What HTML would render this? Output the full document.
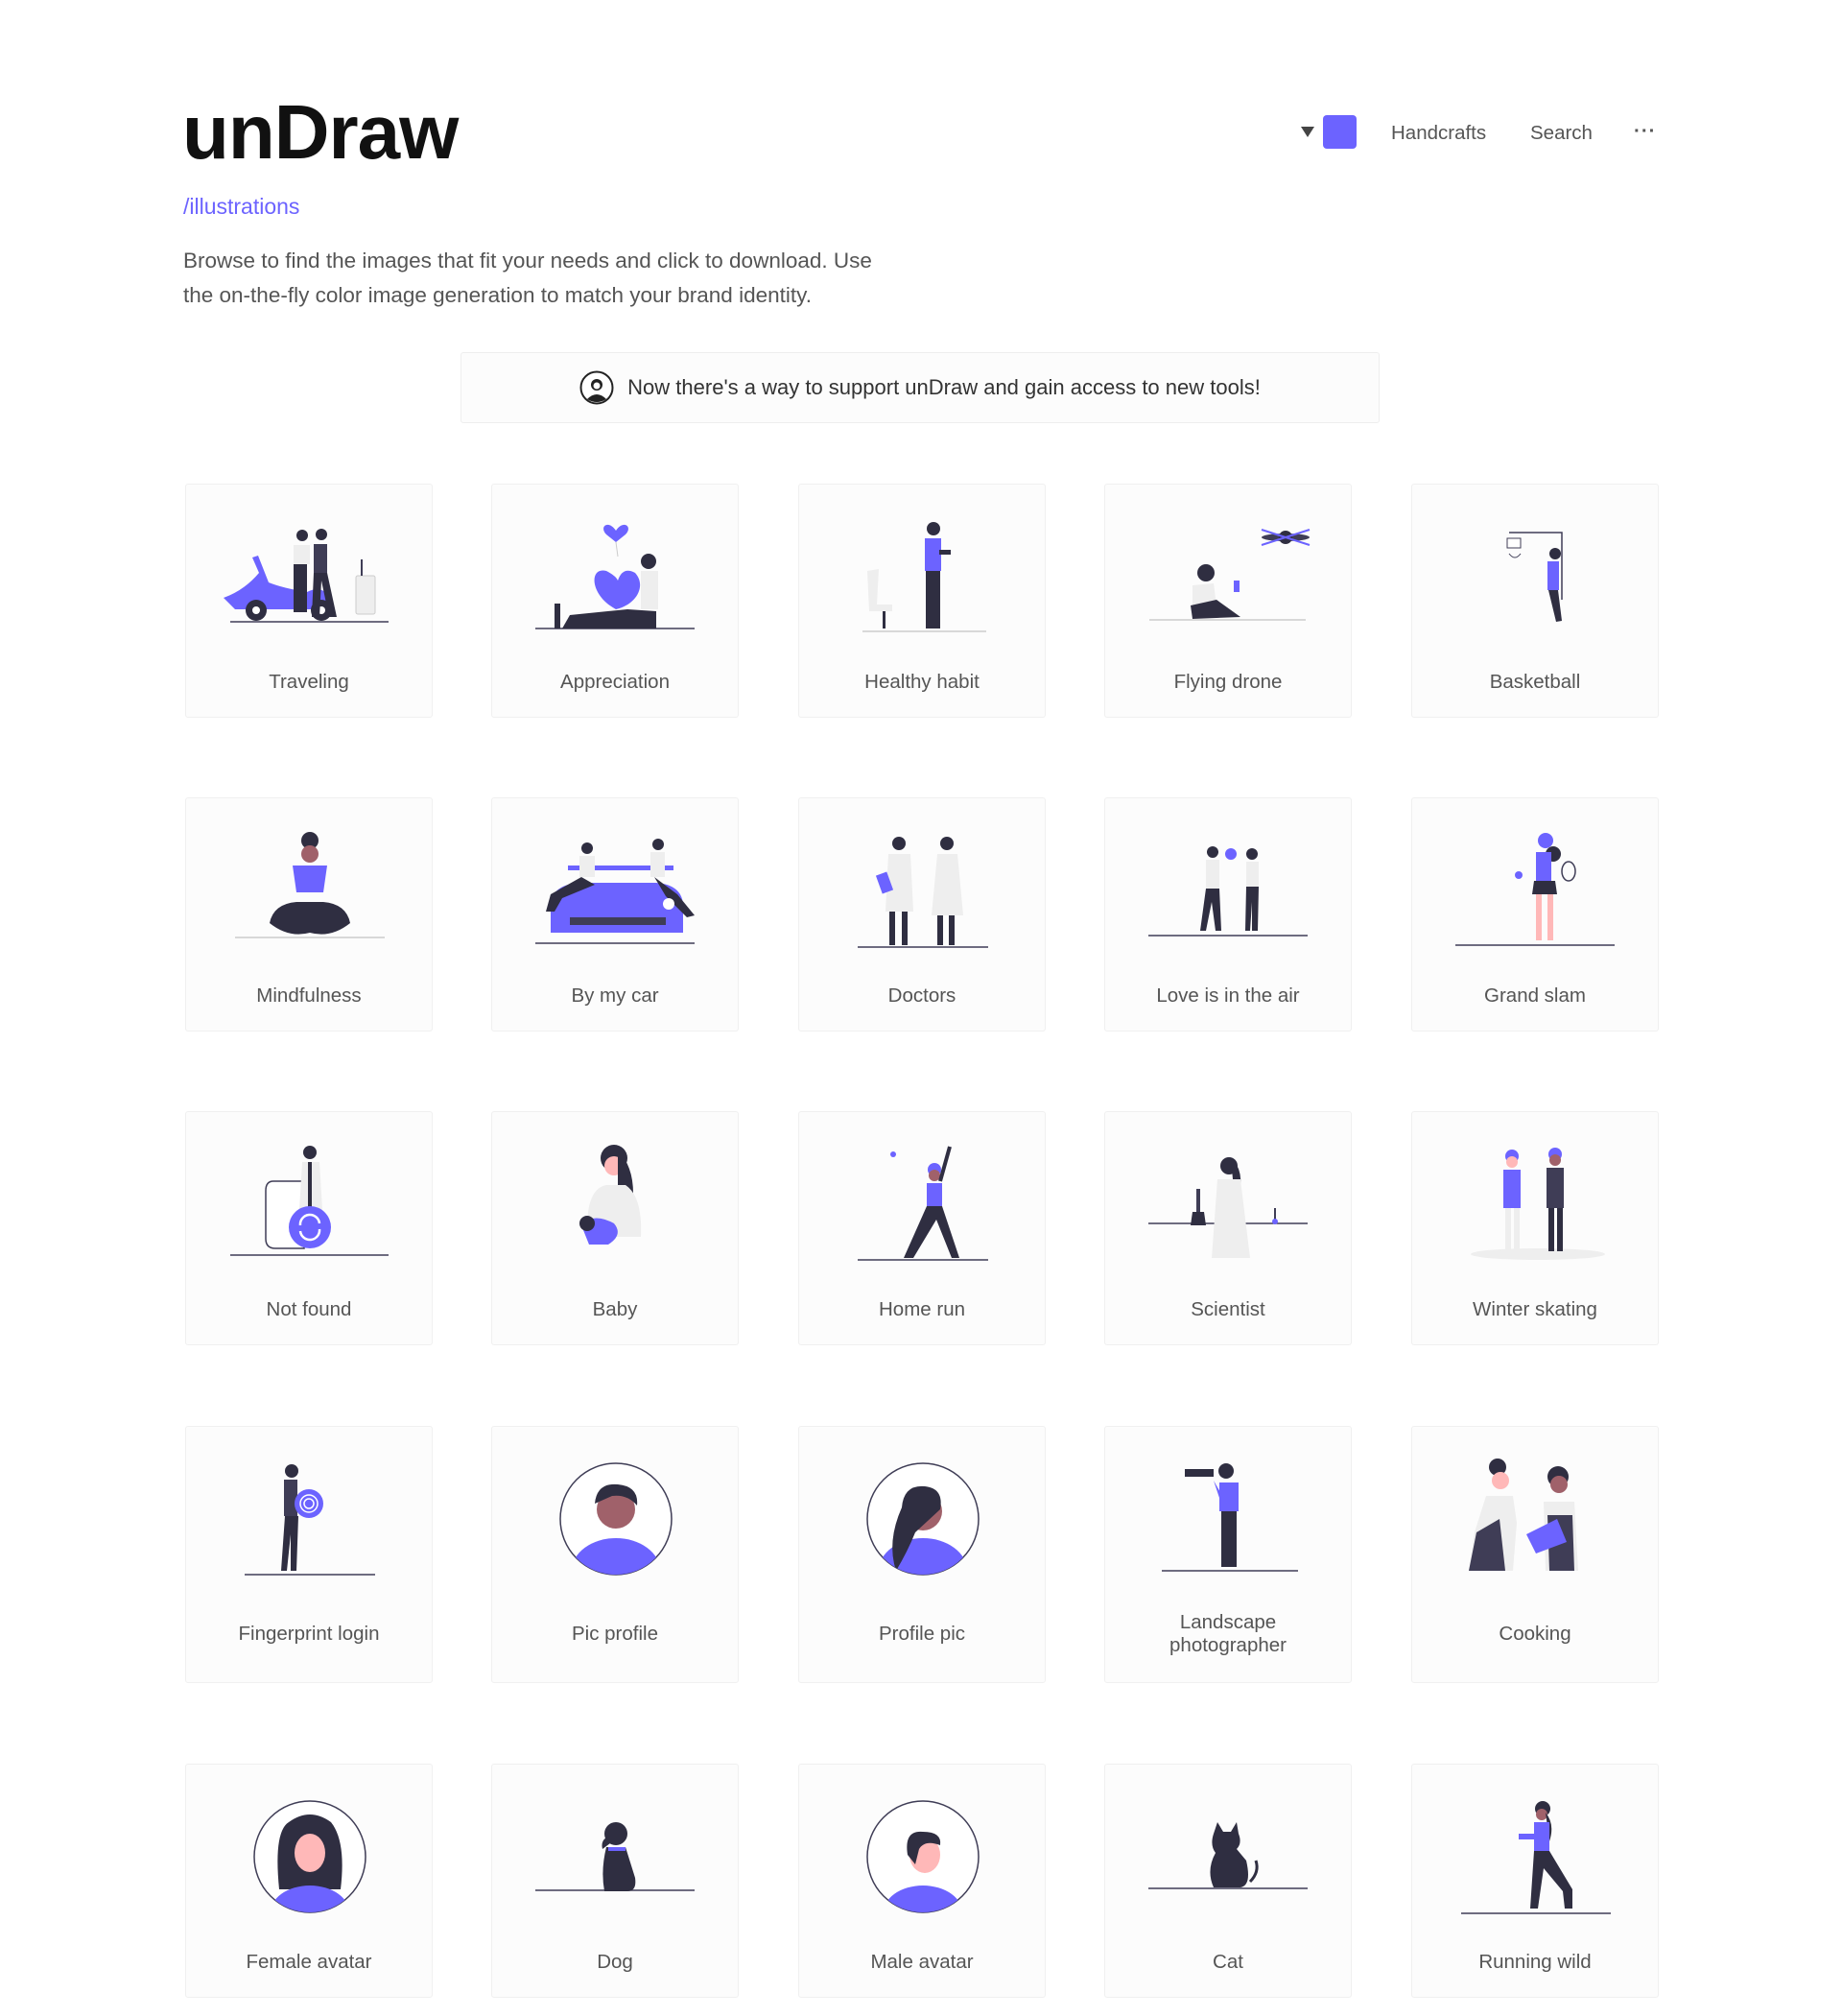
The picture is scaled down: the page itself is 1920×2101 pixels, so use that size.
<!DOCTYPE html>
<html><head><meta charset="utf-8">
<style>
*{margin:0;padding:0;box-sizing:border-box}
html,body{width:1920px;height:2101px;background:#fff;font-family:"Liberation Sans",sans-serif;overflow:hidden}
.abs{position:absolute}
#logo{left:190px;top:92px;font-size:80px;font-weight:bold;color:#111;letter-spacing:-1px}
#sub{left:191px;top:202px;font-size:23px;color:#6c63ff}
#desc{left:191px;top:254px;font-size:22.5px;line-height:36px;color:#555;white-space:nowrap}
#banner{left:480px;top:367px;width:958px;height:74px;background:#fcfcfc;border:1px solid #eee;border-radius:3px;font-size:22px;color:#333;display:flex;align-items:center;justify-content:center;gap:14px}
.nav{top:127px;font-size:20.5px;color:#555}
.card{position:absolute;width:258px;height:244px;background:#fcfcfc;border:1px solid #f0f0f0;border-radius:3px}
.card svg{position:absolute;left:1px;top:0}
.card .l{position:absolute;left:0;right:0;top:194px;text-align:center;font-size:20.5px;line-height:24px;color:#555}
.tall{height:268px}
</style></head><body>
<div id="logo" class="abs">unDraw</div>
<div id="sub" class="abs">/illustrations</div>
<div id="desc" class="abs">Browse to find the images that fit your needs and click to download. Use<br>the on-the-fly color image generation to match your brand identity.</div>
<svg class="abs" style="left:1356px;top:132px" width="14" height="11"><path d="M0 0H14L7 11Z" fill="#444"/></svg>
<div class="abs" style="left:1379px;top:120px;width:35px;height:35px;background:#6c63ff;border-radius:4px"></div>
<div class="abs nav" style="left:1450px">Handcrafts</div>
<div class="abs nav" style="left:1595px">Search</div>
<div class="abs nav" style="left:1703px;top:125px;font-weight:bold;letter-spacing:1px">···</div>
<div id="banner" class="abs"><svg width="36" height="36" viewBox="0 0 36 36"><circle cx="18" cy="18" r="16.5" fill="#fff" stroke="#222" stroke-width="2"/><circle cx="18" cy="15" r="6" fill="#222"/><circle cx="18" cy="16" r="3.5" fill="#fff"/><path d="M8 30Q18 20 28 30Q18 36 8 30Z" fill="#222"/></svg><span>Now there's a way to support unDraw and gain access to new tools!</span></div>

<!-- Row 1 -->
<div class="card" style="left:193px;top:504px"><svg width="256" height="180"><line x1="45" y1="143" x2="210" y2="143" stroke="#3f3d56" stroke-width="1.5"/><path d="M38 118Q60 110 75 92L68 76L74 74L85 102Q100 108 125 112Q140 104 150 118L150 130H50Z" fill="#6c63ff"/><circle cx="72" cy="131" r="11" fill="#2f2e41"/><circle cx="72" cy="131" r="4" fill="#fff"/><circle cx="140" cy="131" r="11" fill="#2f2e41"/><circle cx="140" cy="131" r="4" fill="#fff"/><circle cx="120" cy="53" r="6" fill="#2f2e41"/><rect x="111" y="63" width="17" height="20" fill="#eee"/><rect x="111" y="83" width="14" height="50" fill="#2f2e41"/><circle cx="140" cy="52" r="6" fill="#2f2e41"/><rect x="132" y="62" width="14" height="30" fill="#3f3d56"/><path d="M132 92L146 92L156 138L148 138L140 100L138 138L130 138Z" fill="#2f2e41"/><rect x="176" y="95" width="20" height="40" rx="2" fill="#eee" stroke="#ccc"/><line x1="182" y1="78" x2="182" y2="95" stroke="#3f3d56" stroke-width="2"/></svg><div class="l">Traveling</div></div>
<div class="card" style="left:512px;top:504px"><svg width="256" height="180"><line x1="44" y1="150" x2="210" y2="150" stroke="#3f3d56" stroke-width="1.5"/><path d="M128 48C120 36 110 44 118 52L128 60L138 52C146 44 136 36 128 48Z" fill="#6c63ff"/><line x1="128" y1="60" x2="130" y2="75" stroke="#ccc"/><circle cx="162" cy="80" r="8" fill="#2f2e41"/><rect x="154" y="90" width="18" height="40" fill="#eee"/><path d="M128 130C100 115 100 85 118 90Q128 95 130 100Q135 85 148 92C160 105 150 125 128 130Z" fill="#6c63ff"/><path d="M72 150L80 136L140 130L170 132L170 150Z" fill="#2f2e41"/><rect x="64" y="124" width="6" height="26" fill="#2f2e41"/></svg><div class="l">Appreciation</div></div>
<div class="card" style="left:832px;top:504px"><svg width="256" height="180"><line x1="65" y1="153" x2="194" y2="153" stroke="#ccc" stroke-width="1.5"/><path d="M70 90L82 88L80 125H96V132H72Z" fill="#eee"/><rect x="86" y="132" width="3" height="18" fill="#2f2e41"/><circle cx="139" cy="46" r="7" fill="#2f2e41"/><rect x="130" y="56" width="17" height="34" fill="#6c63ff"/><rect x="131" y="90" width="15" height="60" fill="#2f2e41"/><rect x="145" y="68" width="12" height="5" fill="#2f2e41"/></svg><div class="l">Healthy habit</div></div>
<div class="card" style="left:1151px;top:504px"><svg width="256" height="180"><line x1="45" y1="141" x2="208" y2="141" stroke="#ccc" stroke-width="1.5"/><ellipse cx="187" cy="55" rx="25" ry="4" fill="#3f3d56"/><circle cx="187" cy="55" r="7" fill="#2f2e41"/><path d="M162 47L212 63M162 63L212 47" stroke="#6c63ff" stroke-width="2"/><circle cx="104" cy="92" r="9" fill="#2f2e41"/><path d="M90 105L112 103L115 126L90 126Z" fill="#eee"/><path d="M88 126L115 120L140 138L90 140Z" fill="#2f2e41"/><rect x="133" y="100" width="6" height="12" fill="#6c63ff"/></svg><div class="l">Flying drone</div></div>
<div class="card" style="left:1471px;top:504px"><svg width="256" height="180"><path d="M100 50H155V120" stroke="#3f3d56" stroke-width="1.5" fill="none"/><rect x="98" y="56" width="14" height="10" fill="#fff" stroke="#3f3d56"/><path d="M100 72Q106 80 112 72" stroke="#3f3d56" fill="none"/><circle cx="148" cy="72" r="6" fill="#2f2e41"/><rect x="140" y="80" width="12" height="30" fill="#6c63ff"/><path d="M141 110L151 110L155 142L149 143Z" fill="#2f2e41"/></svg><div class="l">Basketball</div></div>

<!-- Row 2 -->
<div class="card" style="left:193px;top:831px"><svg width="256" height="180"><line x1="50" y1="145" x2="206" y2="145" stroke="#ccc" stroke-width="1.5"/><circle cx="128" cy="44" r="9" fill="#2f2e41"/><circle cx="128" cy="58" r="9" fill="#a0616a"/><path d="M110 70H146L142 98H114Z" fill="#6c63ff"/><path d="M86 130Q90 110 114 108H142Q166 110 170 130Q150 146 128 140Q106 146 86 130Z" fill="#2f2e41"/></svg><div class="l">Mindfulness</div></div>
<div class="card" style="left:512px;top:831px"><svg width="256" height="180"><line x1="44" y1="151" x2="210" y2="151" stroke="#3f3d56" stroke-width="1.5"/><path d="M60 110Q62 90 90 88H170Q196 90 198 110V140H60Z" fill="#6c63ff"/><rect x="78" y="70" width="110" height="5" fill="#6c63ff"/><rect x="80" y="124" width="100" height="8" fill="#3f3d56"/><circle cx="98" cy="52" r="6" fill="#2f2e41"/><rect x="90" y="60" width="16" height="22" fill="#eee"/><path d="M92 82L60 100L55 118L64 118L72 104L106 90Z" fill="#2f2e41"/><circle cx="172" cy="48" r="6" fill="#2f2e41"/><rect x="164" y="56" width="15" height="26" fill="#eee"/><path d="M168 82L192 100L210 122L202 124L180 102Z" fill="#2f2e41"/><circle cx="183" cy="110" r="6" fill="#fff"/></svg><div class="l">By my car</div></div>
<div class="card" style="left:832px;top:831px"><svg width="256" height="180"><line x1="60" y1="155" x2="196" y2="155" stroke="#3f3d56" stroke-width="1.5"/><circle cx="103" cy="47" r="7" fill="#2f2e41"/><path d="M92 58H115L118 118H89Z" fill="#eee"/><rect x="93" y="118" width="6" height="35" fill="#2f2e41"/><rect x="106" y="118" width="6" height="35" fill="#2f2e41"/><rect x="82" y="78" width="12" height="20" fill="#6c63ff" transform="rotate(-20 88 88)"/><circle cx="153" cy="47" r="7" fill="#2f2e41"/><path d="M143 58H164L170 122H137Z" fill="#eee"/><rect x="143" y="122" width="6" height="31" fill="#2f2e41"/><rect x="155" y="122" width="6" height="31" fill="#2f2e41"/></svg><div class="l">Doctors</div></div>
<div class="card" style="left:1151px;top:831px"><svg width="256" height="180"><line x1="44" y1="143" x2="210" y2="143" stroke="#3f3d56" stroke-width="1.5"/><circle cx="111" cy="56" r="6" fill="#2f2e41"/><rect x="104" y="64" width="14" height="30" fill="#eee"/><path d="M104 94H118L120 138H114L110 108L104 138H98Z" fill="#2f2e41"/><circle cx="152" cy="58" r="6" fill="#2f2e41"/><rect x="146" y="66" width="13" height="26" fill="#eee"/><path d="M146 92H159L158 138H152L152 108L150 138H145Z" fill="#2f2e41"/><circle cx="130" cy="58" r="6" fill="#6c63ff"/></svg><div class="l">Love is in the air</div></div>
<div class="card" style="left:1471px;top:831px"><svg width="256" height="180"><line x1="44" y1="153" x2="210" y2="153" stroke="#3f3d56" stroke-width="1.5"/><circle cx="138" cy="44" r="8" fill="#6c63ff"/><circle cx="146" cy="58" r="8" fill="#2f2e41"/><rect x="128" y="56" width="16" height="30" fill="#6c63ff"/><path d="M126 86H148L150 100H124Z" fill="#2f2e41"/><rect x="128" y="100" width="6" height="48" fill="#ffb8b8"/><rect x="140" y="100" width="6" height="48" fill="#ffb8b8"/><ellipse cx="162" cy="76" rx="7" ry="10" fill="none" stroke="#3f3d56" stroke-width="1.5"/><circle cx="110" cy="80" r="4" fill="#6c63ff"/></svg><div class="l">Grand slam</div></div>

<!-- Row 3 -->
<div class="card" style="left:193px;top:1158px"><svg width="256" height="180"><line x1="45" y1="149" x2="210" y2="149" stroke="#3f3d56" stroke-width="1.5"/><path d="M112 72H90Q82 72 82 82V132Q82 142 92 142H122V72Z" fill="#fff" stroke="#3f3d56" stroke-width="1.5"/><circle cx="128" cy="42" r="7" fill="#2f2e41"/><path d="M120 52H138L142 118H116Z" fill="#eee"/><rect x="126" y="52" width="4" height="70" fill="#2f2e41"/><circle cx="128" cy="120" r="22" fill="#6c63ff"/><path d="M118 118A10 10 0 0 1 138 116M138 122A10 10 0 0 1 118 124" stroke="#fff" stroke-width="2.5" fill="none"/></svg><div class="l">Not found</div></div>
<div class="card" style="left:512px;top:1158px"><svg width="256" height="180"><circle cx="126" cy="48" r="14" fill="#2f2e41"/><circle cx="126" cy="56" r="10" fill="#ffb8b8"/><path d="M130 40Q150 60 145 100Q160 120 140 130Q130 110 130 80Z" fill="#2f2e41"/><path d="M98 130Q96 80 118 76H138Q156 88 154 130Z" fill="#eee"/><path d="M92 118Q104 104 126 116Q136 128 120 138H100Z" fill="#6c63ff"/><circle cx="98" cy="116" r="8" fill="#2f2e41"/></svg><div class="l">Baby</div></div>
<div class="card" style="left:832px;top:1158px"><svg width="256" height="180"><line x1="60" y1="154" x2="196" y2="154" stroke="#3f3d56" stroke-width="1.5"/><circle cx="97" cy="44" r="3" fill="#6c63ff"/><circle cx="140" cy="60" r="7" fill="#6c63ff"/><circle cx="140" cy="66" r="6" fill="#a0616a"/><line x1="146" y1="72" x2="156" y2="36" stroke="#2f2e41" stroke-width="4"/><rect x="132" y="74" width="16" height="24" fill="#6c63ff"/><path d="M132 98H148L166 152H158L142 112L118 152H108Z" fill="#2f2e41"/></svg><div class="l">Home run</div></div>
<div class="card" style="left:1151px;top:1158px"><svg width="256" height="180"><line x1="44" y1="116" x2="210" y2="116" stroke="#3f3d56" stroke-width="1.5"/><circle cx="128" cy="56" r="9" fill="#2f2e41"/><path d="M130 48Q145 60 138 90L132 70Z" fill="#2f2e41"/><path d="M116 70H140L150 152H110Z" fill="#eee"/><rect x="94" y="80" width="4" height="24" fill="#3f3d56"/><path d="M90 104H102L104 118H88Z" fill="#2f2e41"/><line x1="176" y1="100" x2="176" y2="112" stroke="#3f3d56" stroke-width="2"/><circle cx="176" cy="114" r="3" fill="#6c63ff"/></svg><div class="l">Scientist</div></div>
<div class="card" style="left:1471px;top:1158px"><svg width="256" height="180"><ellipse cx="130" cy="148" rx="70" ry="6" fill="#eee"/><circle cx="103" cy="46" r="7" fill="#6c63ff"/><circle cx="103" cy="52" r="6" fill="#ffb8b8"/><rect x="94" y="60" width="18" height="40" fill="#6c63ff"/><rect x="96" y="100" width="6" height="45" fill="#eee"/><rect x="105" y="100" width="6" height="45" fill="#eee"/><circle cx="148" cy="44" r="7" fill="#6c63ff"/><circle cx="148" cy="50" r="6" fill="#a0616a"/><rect x="139" y="58" width="18" height="42" fill="#3f3d56"/><rect x="141" y="100" width="6" height="45" fill="#2f2e41"/><rect x="150" y="100" width="6" height="45" fill="#2f2e41"/></svg><div class="l">Winter skating</div></div>

<!-- Row 4 -->
<div class="card tall" style="left:193px;top:1486px"><svg width="256" height="180"><line x1="60" y1="154" x2="196" y2="154" stroke="#3f3d56" stroke-width="1.5"/><circle cx="109" cy="46" r="7" fill="#2f2e41"/><rect x="101" y="55" width="14" height="38" fill="#3f3d56"/><path d="M102 93H116L114 150H108L108 112L104 150H98Z" fill="#2f2e41"/><circle cx="127" cy="80" r="15" fill="#6c63ff"/><circle cx="127" cy="80" r="9" fill="none" stroke="#fff" stroke-width="1.5"/><circle cx="127" cy="80" r="5" fill="none" stroke="#fff" stroke-width="1.5"/></svg><div class="l" style="top:204px">Fingerprint login</div></div>
<div class="card tall" style="left:512px;top:1486px"><svg width="256" height="180"><defs><clipPath id="c1"><circle cx="128" cy="96" r="58"/></clipPath></defs><circle cx="128" cy="96" r="58" fill="#fff" stroke="#3f3d56" stroke-width="1.5"/><g clip-path="url(#c1)"><circle cx="128" cy="86" r="20" fill="#a0616a"/><path d="M106 80Q108 58 130 60Q152 62 150 82Q140 70 124 72Z" fill="#2f2e41"/><ellipse cx="128" cy="150" rx="46" ry="34" fill="#6c63ff"/></g></svg><div class="l" style="top:204px">Pic profile</div></div>
<div class="card tall" style="left:832px;top:1486px"><svg width="256" height="180"><defs><clipPath id="c2"><circle cx="128" cy="96" r="58"/></clipPath></defs><circle cx="128" cy="96" r="58" fill="#fff" stroke="#3f3d56" stroke-width="1.5"/><g clip-path="url(#c2)"><ellipse cx="128" cy="150" rx="46" ry="34" fill="#6c63ff"/><circle cx="128" cy="88" r="20" fill="#a0616a"/><path d="M106 84Q108 60 130 62Q150 64 146 86L120 110Q112 130 100 150Q90 120 106 84Z" fill="#2f2e41"/></g></svg><div class="l" style="top:204px">Profile pic</div></div>
<div class="card tall" style="left:1151px;top:1486px"><svg width="256" height="180"><line x1="58" y1="150" x2="200" y2="150" stroke="#3f3d56" stroke-width="1.5"/><rect x="82" y="44" width="30" height="8" fill="#2f2e41"/><circle cx="125" cy="46" r="8" fill="#2f2e41"/><rect x="118" y="58" width="20" height="30" fill="#6c63ff"/><path d="M112 56L120 70L118 74Z" fill="#6c63ff"/><rect x="120" y="88" width="16" height="58" fill="#2f2e41"/></svg><div class="l" style="top:192px">Landscape<br>photographer</div></div>
<div class="card tall" style="left:1471px;top:1486px"><svg width="256" height="180"><circle cx="88" cy="42" r="9" fill="#2f2e41"/><circle cx="91" cy="56" r="9" fill="#ffb8b8"/><path d="M76 72H104L108 100L104 150H58L64 110Z" fill="#eee"/><path d="M66 110L90 96L96 150H58Z" fill="#3f3d56"/><circle cx="151" cy="52" r="11" fill="#2f2e41"/><circle cx="152" cy="60" r="9" fill="#a0616a"/><path d="M136 78H168L172 150H138Z" fill="#eee"/><path d="M140 92H166L168 150H142Z" fill="#3f3d56"/><path d="M118 112L150 96L160 120L128 132Z" fill="#6c63ff"/></svg><div class="l" style="top:204px">Cooking</div></div>

<!-- Row 5 -->
<div class="card" style="left:193px;top:1838px"><svg width="256" height="180"><defs><clipPath id="c3"><circle cx="128" cy="96" r="58"/></clipPath></defs><circle cx="128" cy="96" r="58" fill="#fff" stroke="#3f3d56" stroke-width="1.5"/><g clip-path="url(#c3)"><path d="M96 130Q90 70 106 60Q128 44 150 60Q166 80 160 130Z" fill="#2f2e41"/><ellipse cx="128" cy="156" rx="42" ry="30" fill="#6c63ff"/><ellipse cx="128" cy="92" rx="16" ry="20" fill="#ffb8b8"/></g></svg><div class="l">Female avatar</div></div>
<div class="card" style="left:512px;top:1838px"><svg width="256" height="180"><line x1="44" y1="131" x2="210" y2="131" stroke="#3f3d56" stroke-width="1.5"/><circle cx="128" cy="72" r="12" fill="#2f2e41"/><path d="M118 76Q112 80 114 88L122 82Z" fill="#2f2e41"/><path d="M118 86H138L148 118Q150 132 140 132H116Q112 110 118 86Z" fill="#2f2e41"/><rect x="120" y="86" width="18" height="4" fill="#6c63ff"/></svg><div class="l">Dog</div></div>
<div class="card" style="left:832px;top:1838px"><svg width="256" height="180"><defs><clipPath id="c4"><circle cx="128" cy="96" r="58"/></clipPath></defs><circle cx="128" cy="96" r="58" fill="#fff" stroke="#3f3d56" stroke-width="1.5"/><g clip-path="url(#c4)"><ellipse cx="128" cy="156" rx="42" ry="30" fill="#6c63ff"/><ellipse cx="130" cy="94" rx="16" ry="19" fill="#ffb8b8"/><path d="M112 94Q108 68 128 70Q148 70 146 84Q130 78 124 88L120 104Z" fill="#2f2e41"/></g></svg><div class="l">Male avatar</div></div>
<div class="card" style="left:1151px;top:1838px"><svg width="256" height="180"><line x1="44" y1="129" x2="210" y2="129" stroke="#3f3d56" stroke-width="1.5"/><path d="M112 72L116 60L122 70H130L136 60L138 72Q142 82 136 88L146 100Q152 126 140 128H112Q104 110 114 92Q108 84 112 72Z" fill="#2f2e41"/><path d="M150 122Q160 112 156 100" stroke="#2f2e41" stroke-width="3" fill="none"/></svg><div class="l">Cat</div></div>
<div class="card" style="left:1471px;top:1838px"><svg width="256" height="180"><line x1="50" y1="155" x2="206" y2="155" stroke="#3f3d56" stroke-width="1.5"/><circle cx="135" cy="46" r="8" fill="#2f2e41"/><circle cx="134" cy="52" r="6" fill="#a0616a"/><path d="M138 50Q148 62 142 80Z" fill="#2f2e41"/><rect x="126" y="60" width="16" height="30" fill="#6c63ff"/><path d="M110 72H128V78H110Z" fill="#6c63ff"/><path d="M126 90H142L166 130L166 150H158L156 132L136 108L130 150H122Z" fill="#2f2e41"/></svg><div class="l">Running wild</div></div>
</body></html>
